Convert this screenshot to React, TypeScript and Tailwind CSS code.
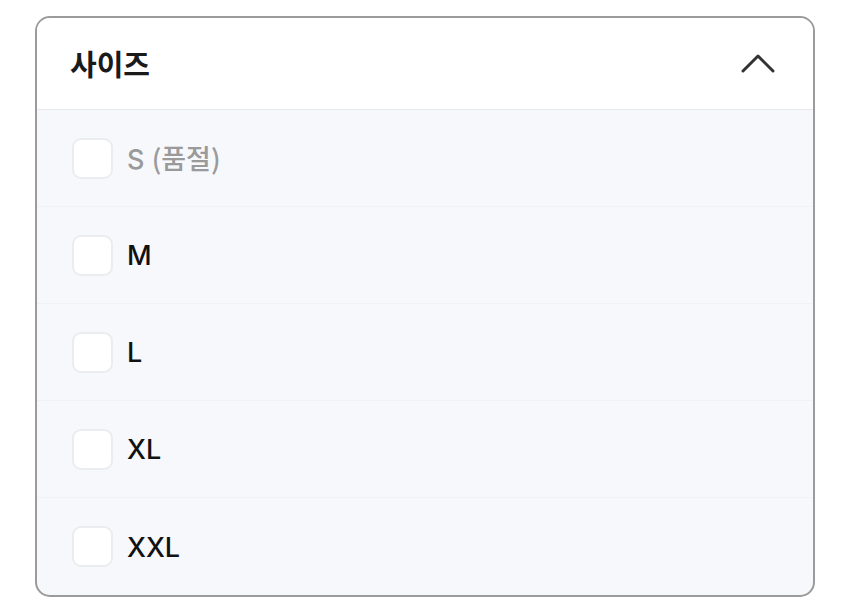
import React from "react";

type SizeOption = { label: string; soldOut?: boolean };

const sizes: SizeOption[] = [
  { label: "S (품절)", soldOut: true },
  { label: "M" },
  { label: "L" },
  { label: "XL" },
  { label: "XXL" },
];

function ChevronUp() {
  return (
    <svg width="34" height="20" viewBox="0 0 34 20" fill="none">
      <path
        d="M2 17 L17 2 L32 17"
        stroke="#333333"
        strokeWidth="3"
        strokeLinecap="round"
        strokeLinejoin="round"
      />
    </svg>
  );
}

export default function App() {
  return (
    <div
      className="min-h-[615px] w-[850px] bg-white pl-[35px] pt-[16px]"
      style={{ fontFamily: 'Inter, "Noto Sans CJK KR", sans-serif' }}
    >
      <div className="w-[780px] overflow-hidden rounded-[15px] border-2 border-[#9b9b9b] bg-[#f7f8fb]">
        <div className="flex h-[92px] items-center justify-between border-b border-[#e8e9ec] bg-white pl-[33px] pr-[38px]">
          <span
            className="text-[29px] font-bold text-[#1a1a1a]"
            style={{ fontFamily: '"Noto Sans CJK KR", sans-serif' }}
          >
            사이즈
          </span>
          <ChevronUp />
        </div>
        {sizes.map((s, i) => (
          <div
            key={s.label}
            className={`flex h-[97px] items-center gap-[14px] pl-[35px] ${
              i < sizes.length - 1 ? "border-b border-[#f1f2f5]" : ""
            }`}
          >
            <div className="h-[41px] w-[41px] rounded-[9px] border-2 border-[#ebecef] bg-white" />
            <span
              className={`pt-[3px] text-[27px] font-medium ${s.soldOut ? "text-[#9a9a9a]" : "text-[#111111]"}`}
            >
              {s.soldOut ? (
                <>
                  S{" "}
                  <span style={{ fontFamily: '"Noto Sans CJK KR", sans-serif' }}>
                    (품절)
                  </span>
                </>
              ) : (
                s.label
              )}
            </span>
          </div>
        ))}
      </div>
    </div>
  );
}
